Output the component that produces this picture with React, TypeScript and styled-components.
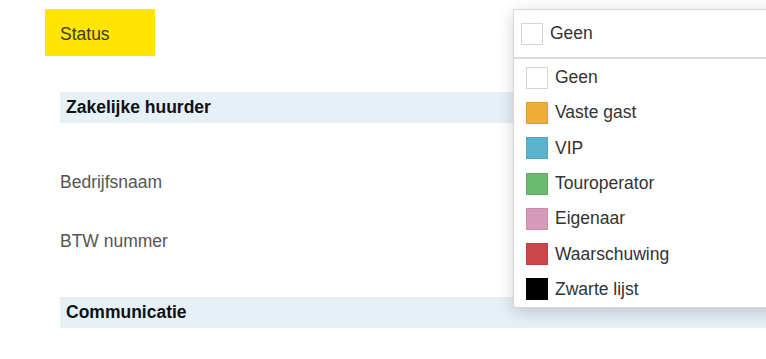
import React from 'react'
import styled, { createGlobalStyle } from 'styled-components'

const GlobalStyle = createGlobalStyle`
  html, body {
    margin: 0;
    padding: 0;
    background: #ffffff;
    overflow: hidden;
  }
  body {
    font-family: 'Liberation Sans', Arial, sans-serif;
    font-size: 17.5px;
    color: #333;
  }
`

interface StatusOption {
  label: string
  color: string
}

const statusOptions: StatusOption[] = [
  { label: 'Geen', color: '#ffffff' },
  { label: 'Vaste gast', color: '#f0ad35' },
  { label: 'VIP', color: '#5bb4cd' },
  { label: 'Touroperator', color: '#6aba70' },
  { label: 'Eigenaar', color: '#d99aba' },
  { label: 'Waarschuwing', color: '#c9474a' },
  { label: 'Zwarte lijst', color: '#000000' }
]

const Page = styled.div`
  width: 766px;
  height: 359px;
  padding: 9px 0 0 45px;
  box-sizing: border-box;
`

const StatusRow = styled.div`
  display: grid;
  grid-template-columns: 468px 320px;
  align-items: start;
`

const StatusLabel = styled.div`
  width: 110px;
  height: 47px;
  background: #ffe500;
  color: #3a3a2a;
  display: flex;
  align-items: center;
  padding: 3px 0 0 15px;
  box-sizing: border-box;
`

// the select keeps its closed footprint in the row; the open box lies over the form
const SelectAnchor = styled.div`
  position: relative;
  height: 49px;
`

const Dropdown = styled.div`
  position: absolute;
  top: 0;
  left: 0;
  right: 0;
  z-index: 2;
  background: #ffffff;
  border: 1px solid #d6d6d6;
  border-right: none;
  border-radius: 3px 0 0 3px;
  box-shadow: 0 4px 16px rgba(0, 0, 0, 0.18);
`

const SelectHeader = styled.div`
  height: 47px;
  display: flex;
  align-items: center;
  gap: 7px;
  padding-left: 7px;
  border-bottom: 2px solid #dadada;
`

const Swatch = styled.span<{ color: string }>`
  width: 22px;
  height: 22px;
  box-sizing: border-box;
  background: ${(props) => props.color};
  border: 1px solid ${(props) => (props.color === '#ffffff' ? '#d4d4d4' : 'rgba(0,0,0,0.08)')};
  flex-shrink: 0;
`

const OptionList = styled.ul`
  list-style: none;
  margin: 0;
  padding: 1px 0 0;
`

const OptionItem = styled.li`
  height: 35.3px;
  display: flex;
  align-items: center;
  gap: 7px;
  padding-left: 12px;
`

const Section = styled.div`
  padding-left: 15px;
`

const SectionBand = styled.div<{ top: number }>`
  margin-top: ${(props) => props.top}px;
  height: 31px;
  background: #e6f0f7;
  display: flex;
  align-items: center;
  padding-left: 6px;
  font-weight: bold;
  font-size: 17.5px;
  color: #111;
`

const Fields = styled.div`
  padding-top: 30px;
`

const FieldRow = styled.div`
  height: 59px;
  display: flex;
  align-items: center;
  color: #555;
`

const App: React.FC = () => {
  return (
    <>
      <GlobalStyle />
      <Page>
        <StatusRow>
          <StatusLabel>Status</StatusLabel>
          <SelectAnchor>
            <Dropdown>
              <SelectHeader>
                <Swatch color='#ffffff' />
                <span>Geen</span>
              </SelectHeader>
              <OptionList>
                {statusOptions.map((opt) => (
                  <OptionItem key={opt.label}>
                    <Swatch color={opt.color} />
                    <span>{opt.label}</span>
                  </OptionItem>
                ))}
              </OptionList>
            </Dropdown>
          </SelectAnchor>
        </StatusRow>
        <Section>
          <SectionBand top={34}>Zakelijke huurder</SectionBand>
          <Fields>
            <FieldRow>Bedrijfsnaam</FieldRow>
            <FieldRow>BTW nummer</FieldRow>
          </Fields>
          <SectionBand top={26}>Communicatie</SectionBand>
        </Section>
      </Page>
    </>
  )
}

export default App
